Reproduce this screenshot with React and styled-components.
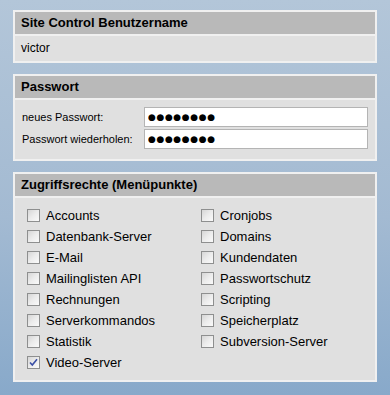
import React from "react";
import styled, { createGlobalStyle } from "styled-components";

const Global = createGlobalStyle`
  html, body { margin: 0; padding: 0; }
  body {
    min-height: 395px;
    background: linear-gradient(180deg, #b3c6d9 0%, #a3bad2 55%, #88a9ca 100%);
    font-family: "Liberation Sans", Arial, sans-serif;
    color: #000;
  }
`;

const Page = styled.div`
  display: flex;
  flex-direction: column;
  gap: 11px;
  padding: 10px 13px 12px 13px;
  width: 364px;
`;

const Panel = styled.section`
  background: #f0f0f0;
  padding: 2px;
  display: flex;
  flex-direction: column;
  gap: 2px;
`;

const Header = styled.h2`
  margin: 0;
  height: 22px;
  line-height: 22px;
  padding-left: 6px;
  background: #b9b9b9;
  font-size: 13px;
  font-weight: bold;
  color: #000;
`;

const Body = styled.div`
  background: #e0e0e0;
`;

const UserBody = styled(Body)`
  height: 25px;
  line-height: 25px;
  padding-left: 6px;
  font-size: 12px;
`;

const PassBody = styled(Body)`
  display: grid;
  grid-template-columns: 122px 1fr;
  row-gap: 2px;
  align-items: center;
  padding: 7px 7px 10px 7px;
`;

const Label = styled.label`
  font-size: 11px;
`;

const PassInput = styled.input`
  box-sizing: border-box;
  height: 20px;
  width: 100%;
  margin: 0;
  border: 1px solid #b4b4b4;
  background: #fff;
  padding: 0 3px;
  font-family: "DejaVu Sans", Verdana, sans-serif;
  font-size: 9px;
  letter-spacing: 0.6px;
  color: #000;
  outline: none;
`;

const RightsBody = styled(Body)`
  display: flex;
  padding: 7px 0 7px 12px;
  height: 168px;
`;

const Column = styled.ul`
  list-style: none;
  margin: 0;
  padding: 0;
  width: 174px;
  display: flex;
  flex-direction: column;
`;

const Item = styled.li`
  height: 21px;
  display: flex;
  align-items: center;
  font-size: 13px;
`;

const Box = styled.span`
  box-sizing: border-box;
  width: 13px;
  height: 13px;
  margin-right: 6px;
  border: 1px solid #8e8f8f;
  background: linear-gradient(135deg, #d6d6d6 0%, #ececec 50%, #fafafa 100%);
  display: flex;
  align-items: center;
  justify-content: center;
  flex: none;
`;

const Check = () => (
  <svg width="9" height="9" viewBox="0 0 9 9">
    <path d="M1 4.5 L3.3 7 L8 1.2" fill="none" stroke="#3a4fa6" strokeWidth="1.6" />
  </svg>
);

const CheckItem = ({ label, checked }) => (
  <Item>
    <Box>{checked && <Check />}</Box>
    {label}
  </Item>
);

const left = [
  "Accounts",
  "Datenbank-Server",
  "E-Mail",
  "Mailinglisten API",
  "Rechnungen",
  "Serverkommandos",
  "Statistik",
  "Video-Server",
];
const right = [
  "Cronjobs",
  "Domains",
  "Kundendaten",
  "Passwortschutz",
  "Scripting",
  "Speicherplatz",
  "Subversion-Server",
];

const DOTS = "\u25CF".repeat(8);

export default function App() {
  return (
    <>
      <Global />
      <Page>
        <Panel>
          <Header>Site Control Benutzername</Header>
          <UserBody>victor</UserBody>
        </Panel>
        <Panel>
          <Header>Passwort</Header>
          <PassBody>
            <Label>neues Passwort:</Label>
            <PassInput type="text" defaultValue={DOTS} readOnly />
            <Label>Passwort wiederholen:</Label>
            <PassInput type="text" defaultValue={DOTS} readOnly />
          </PassBody>
        </Panel>
        <Panel>
          <Header>Zugriffsrechte (Menüpunkte)</Header>
          <RightsBody>
            <Column>
              {left.map((l) => (
                <CheckItem key={l} label={l} checked={l === "Video-Server"} />
              ))}
            </Column>
            <Column>
              {right.map((l) => (
                <CheckItem key={l} label={l} />
              ))}
            </Column>
          </RightsBody>
        </Panel>
      </Page>
    </>
  );
}
